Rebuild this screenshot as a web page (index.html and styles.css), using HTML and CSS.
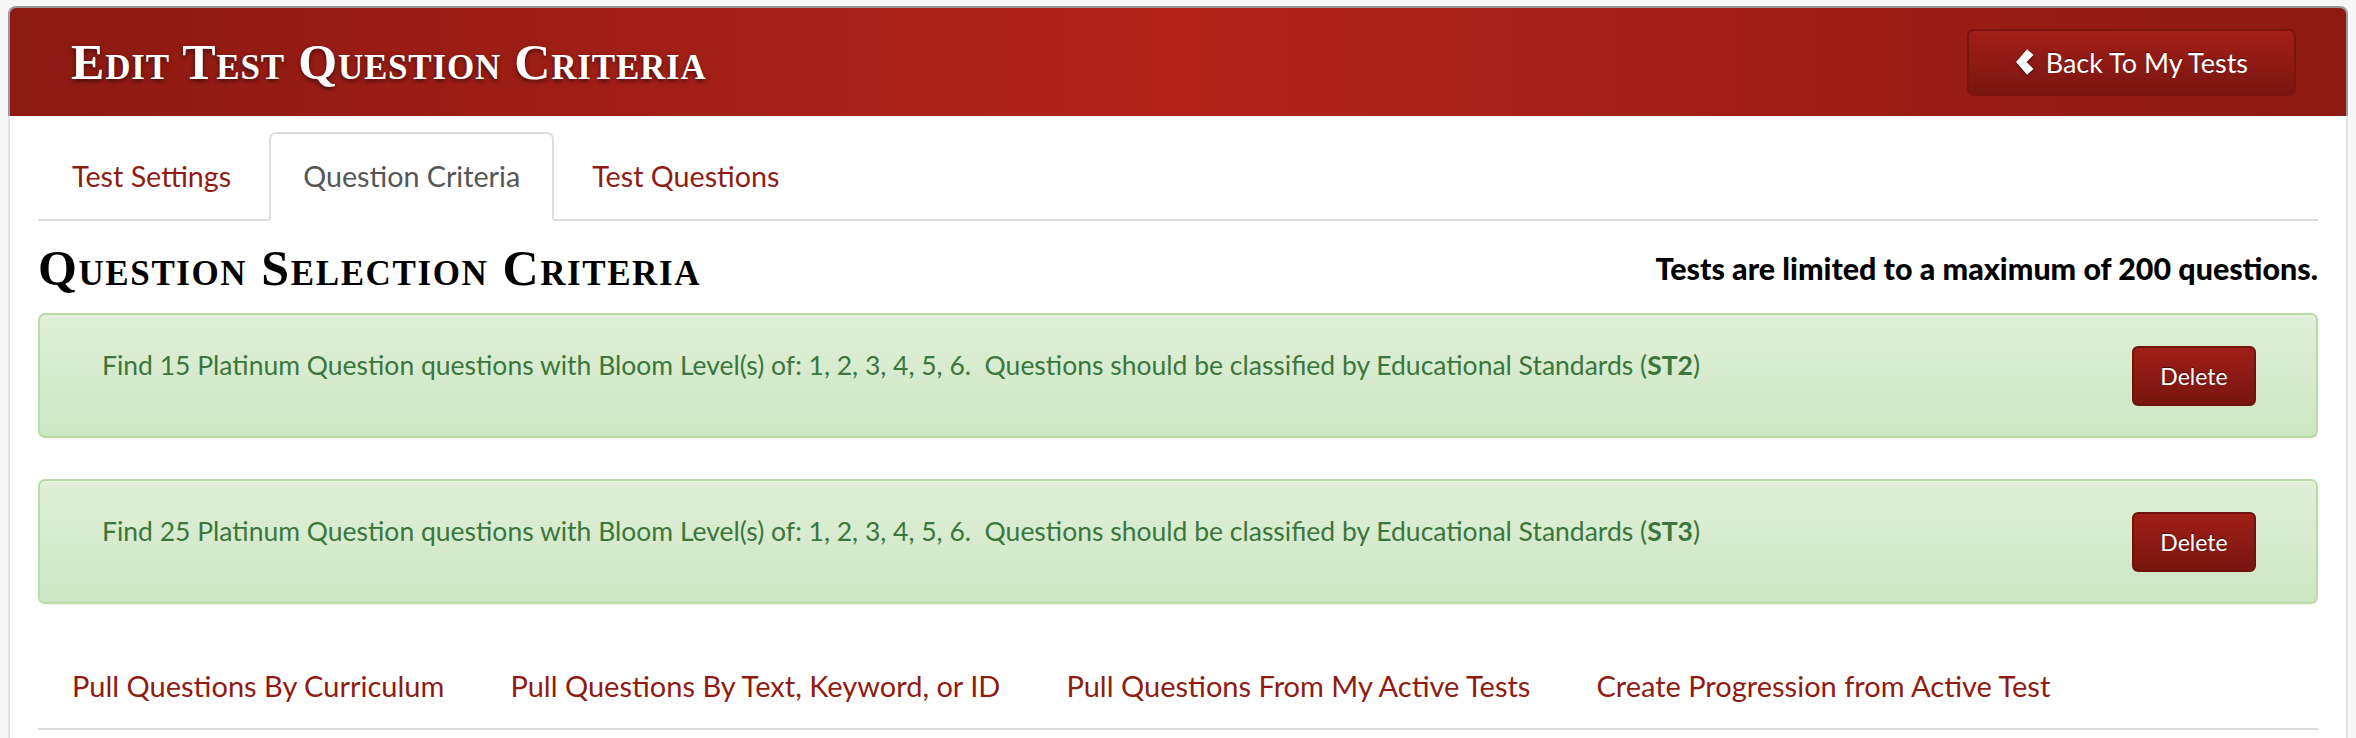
FILE: index.html
```html
<!DOCTYPE html>
<html lang="en">
<head>
    <meta charset="UTF-8">
    <meta name="viewport" content="width=device-width, initial-scale=1.0">
    <title>Edit Test Question Criteria</title>
    <link rel="stylesheet" href="styles.css">
</head>
<body>

    <div class="panel">
        <div class="panel-heading">
            <h1 class="page-title">Edit Test Question Criteria</h1>
            <a href="#" class="btn-back">
                <svg class="chevron" viewBox="0 0 17 24" width="18" height="26">
                    <polygon points="10.5,0 16.5,5.5 10,12 16.5,18.5 10.5,24 0,12" fill="#fff"/>
                </svg>
                <span>Back To My Tests</span>
            </a>
        </div>

        <div class="panel-body">
            <ul class="nav-tabs">
                <li><a href="#">Test Settings</a></li>
                <li class="active"><a href="#">Question Criteria</a></li>
                <li><a href="#">Test Questions</a></li>
            </ul>

            <div class="criteria-head">
                <h2>Question Selection Criteria</h2>
                <p class="limit">Tests are limited to a maximum of 200 questions.</p>
            </div>

            <div class="alert">
                <p>Find 15 Platinum Question questions with Bloom Level(s) of: 1, 2, 3, 4, 5, 6.&nbsp; Questions should be classified by Educational Standards (<b>ST2</b>)</p>
                <button class="btn-delete">Delete</button>
            </div>

            <div class="alert last">
                <p>Find 25 Platinum Question questions with Bloom Level(s) of: 1, 2, 3, 4, 5, 6.&nbsp; Questions should be classified by Educational Standards (<b>ST3</b>)</p>
                <button class="btn-delete">Delete</button>
            </div>

            <ul class="nav-tabs pull-links">
                <li><a href="#">Pull Questions By Curriculum</a></li>
                <li><a href="#">Pull Questions By Text, Keyword, or ID</a></li>
                <li><a href="#">Pull Questions From My Active Tests</a></li>
                <li><a href="#">Create Progression from Active Test</a></li>
            </ul>
        </div>
    </div>

</body>
</html>
```

FILE: styles.css
```css
body {
    margin: 0;
    background-color: #f7f7f7;
    font-family: "Lato", "Liberation Sans", sans-serif;
    font-size: 24px;
    color: #333;
}
a {
    text-decoration: none;
}
.panel {
    margin: 6px 8px 0 8px;
    background-color: #fff;
    border: 2px solid #e4e4e4;
    border-top: none;
    border-radius: 8px 8px 0 0;
    height: 740px;
}
.panel-heading {
    display: flex;
    align-items: center;
    justify-content: space-between;
    height: 108px;
    margin: 0 -2px;
    padding: 0 50px 0 61px;
    border: 2px solid #9a9a9a;
    border-bottom: none;
    border-radius: 8px 8px 0 0;
    background: linear-gradient(to right, #8c1a12 0%, #b3231a 50%, #8c1a12 100%);
}
.page-title {
    margin: 0;
    font-family: "Liberation Serif", "DejaVu Serif", serif;
    font-variant: small-caps;
    font-weight: bold;
    font-size: 50px;
    letter-spacing: 0.8px;
    color: #fff;
    text-shadow: 0 2px 4px rgba(0,0,0,0.6);
}
.btn-back {
    display: flex;
    align-items: center;
    gap: 12px;
    height: 63px;
    padding: 0 46px 0 47px;
    border: 2px solid #7b150f;
    border-radius: 7px;
    background: linear-gradient(to bottom, #a21f17 0%, #7a1610 100%);
    color: #fff;
    font-size: 27px;
    text-shadow: 0 -1px 1px rgba(0,0,0,0.4);
}
.chevron {
    filter: drop-shadow(0 1px 1px rgba(0,0,0,0.6));
}
.panel-body {
    padding: 16px 28px 0 28px;
}
.nav-tabs {
    display: flex;
    margin: 0;
    padding: 0;
    list-style: none;
    border-bottom: 2px solid #ddd;
}
.nav-tabs li {
    margin-right: 4px;
    margin-bottom: -2px;
}
.nav-tabs a {
    display: block;
    height: 85px;
    line-height: 85px;
    padding: 0 32px;
    border: 2px solid transparent;
    border-radius: 7px 7px 0 0;
    color: #8f1b13;
    font-size: 28.7px;
}
.nav-tabs .active a {
    color: #555;
    background-color: #fff;
    border-color: #ddd;
    border-bottom-color: transparent;
}
.criteria-head {
    display: flex;
    align-items: center;
    justify-content: space-between;
    height: 92px;
    padding-top: 2px;
    box-sizing: border-box;
}
.criteria-head h2 {
    margin: 0;
    font-family: "Liberation Serif", "DejaVu Serif", serif;
    font-variant: small-caps;
    font-weight: bold;
    font-size: 50px;
    letter-spacing: 1.6px;
    color: #000;
}
.limit {
    margin: 0;
    font-weight: 900;
    font-size: 30.4px;
    color: #000;
}
.alert {
    display: flex;
    align-items: flex-start;
    justify-content: space-between;
    padding: 31px 60px 30px 62px;
    margin-bottom: 41px;
    border: 2px solid #b7dca7;
    border-radius: 7px;
    background: linear-gradient(to bottom, #e0f0d9 0%, #cce6c1 100%);
    box-shadow: inset 0 1px 0 rgba(255,255,255,0.25), 0 1px 2px rgba(0,0,0,0.05);
    color: #3c763d;
}
.alert.last {
    margin-bottom: 37px;
}
.alert p {
    margin: 0;
    font-size: 26.5px;
    line-height: 38px;
}
.btn-delete {
    width: 124px;
    height: 60px;
    border: 2px solid #6f140e;
    border-radius: 6px;
    background: linear-gradient(to bottom, #a01f16 0%, #77150f 100%);
    color: #fff;
    font-family: "Lato", "Liberation Sans", sans-serif;
    font-size: 23px;
    text-shadow: 0 -1px 1px rgba(0,0,0,0.5);
    cursor: pointer;
}
.pull-links li {
    margin-right: -2px;
}
.pull-links a {
    color: #8f1b13;
    font-size: 29px;
}
```
